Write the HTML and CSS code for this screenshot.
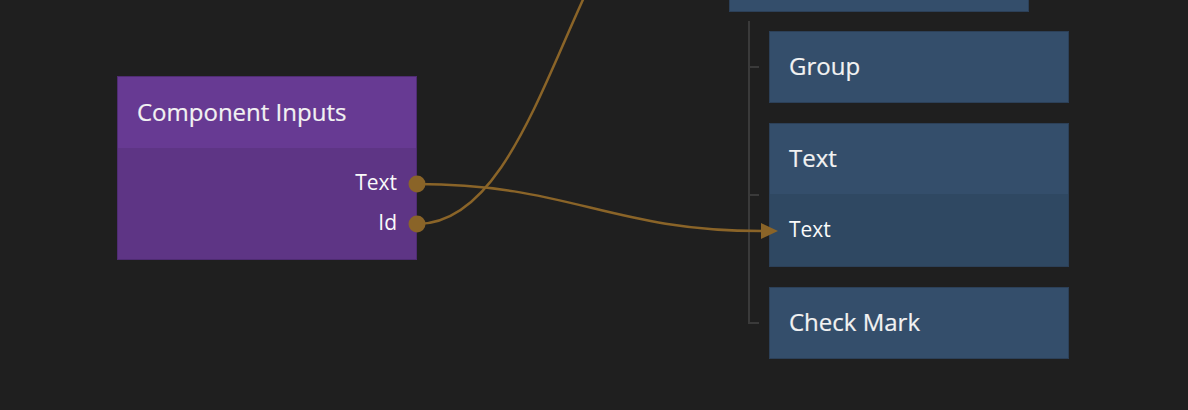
FILE: index.html
```html
<!DOCTYPE html>
<html lang="en">
<head>
    <meta charset="UTF-8">
    <title>Node Graph</title>
    <link rel="stylesheet" href="styles.css">
</head>
<body>
    <div id="canvas">
        <div class="node purple" id="inputsNode">
            <div class="node-title">Component Inputs</div>
            <div class="node-ports out">
                <div class="port">Text</div>
                <div class="port">Id</div>
            </div>
        </div>

        <div class="node blue" id="parentNode"></div>

        <div id="children">
            <div class="node blue">
                <div class="node-title">Group</div>
            </div>
            <div class="node blue">
                <div class="node-title">Text</div>
                <div class="node-ports in">
                    <div class="port">Text</div>
                </div>
            </div>
            <div class="node blue">
                <div class="node-title">Check Mark</div>
            </div>
        </div>

        <svg id="wires" width="1188" height="410" viewBox="0 0 1188 410">
            <!-- hierarchy line -->
            <path d="M749 21 V323 H759 M749 67 H759 M749 195 H759" class="tree" />
            <!-- connections -->
            <path d="M417 184 C 570 184, 610 231, 762 231" class="wire" />
            <path d="M417 224 C 500 224, 540 90, 592 -20" class="wire" />
            <polygon points="761,223 778,231 761,239" class="arrow" />
            <circle cx="417" cy="184" r="8.5" class="dot" />
            <circle cx="417" cy="224" r="8.5" class="dot" />
        </svg>
    </div>
</body>
</html>
```

FILE: styles.css
```css
body {
    margin: 0;
    padding: 0;
    background: #1f1f1f;
    color: #fff;
    font-family: 'Open Sans', 'Noto Sans', sans-serif;
    overflow: hidden;
}

#canvas {
    position: relative;
    width: 1188px;
    height: 410px;
    overflow: hidden;
}

.node {
    position: relative;
    width: 300px;
    box-sizing: border-box;
    border: 1px solid transparent;
}

.node.purple {
    background: #5e3585;
    border-color: #4f2c72;
}

.node.purple .node-title {
    background: #673a93;
}

.node.blue {
    background: #344e6b;
    border-color: #2c4058;
}

.node-title {
    height: 71px;
    box-sizing: border-box;
    display: flex;
    align-items: center;
    padding: 0 19px 3px;
    font-size: 24px;
    color: #f2f2f2;
    -webkit-text-stroke: 0.2px #f2f2f2;
}

.node-ports {
    padding: 15px 0 16px;
}

.node-ports.out .port {
    justify-content: flex-end;
    padding-right: 19px;
}

.node-ports.in {
    background: #2f4862;
    padding: 16px 0;
}

.port {
    height: 40px;
    box-sizing: border-box;
    display: flex;
    align-items: center;
    padding-left: 19px;
    padding-bottom: 2px;
    font-size: 21px;
    color: #fafafa;
}

#inputsNode {
    position: absolute;
    left: 117px;
    top: 76px;
}

#parentNode {
    position: absolute;
    left: 729px;
    top: -62px;
    height: 74px;
}

#children {
    position: absolute;
    left: 769px;
    top: 31px;
    display: flex;
    flex-direction: column;
    gap: 20px;
}

#children .node-title {
    height: 70px;
}

#wires {
    position: absolute;
    left: 0;
    top: 0;
    pointer-events: none;
}

.tree {
    fill: none;
    stroke: #3a3a3a;
    stroke-width: 2;
}

.wire {
    fill: none;
    stroke: #8a6428;
    stroke-width: 2.5;
}

.arrow,
.dot {
    fill: #8a6428;
}
```
